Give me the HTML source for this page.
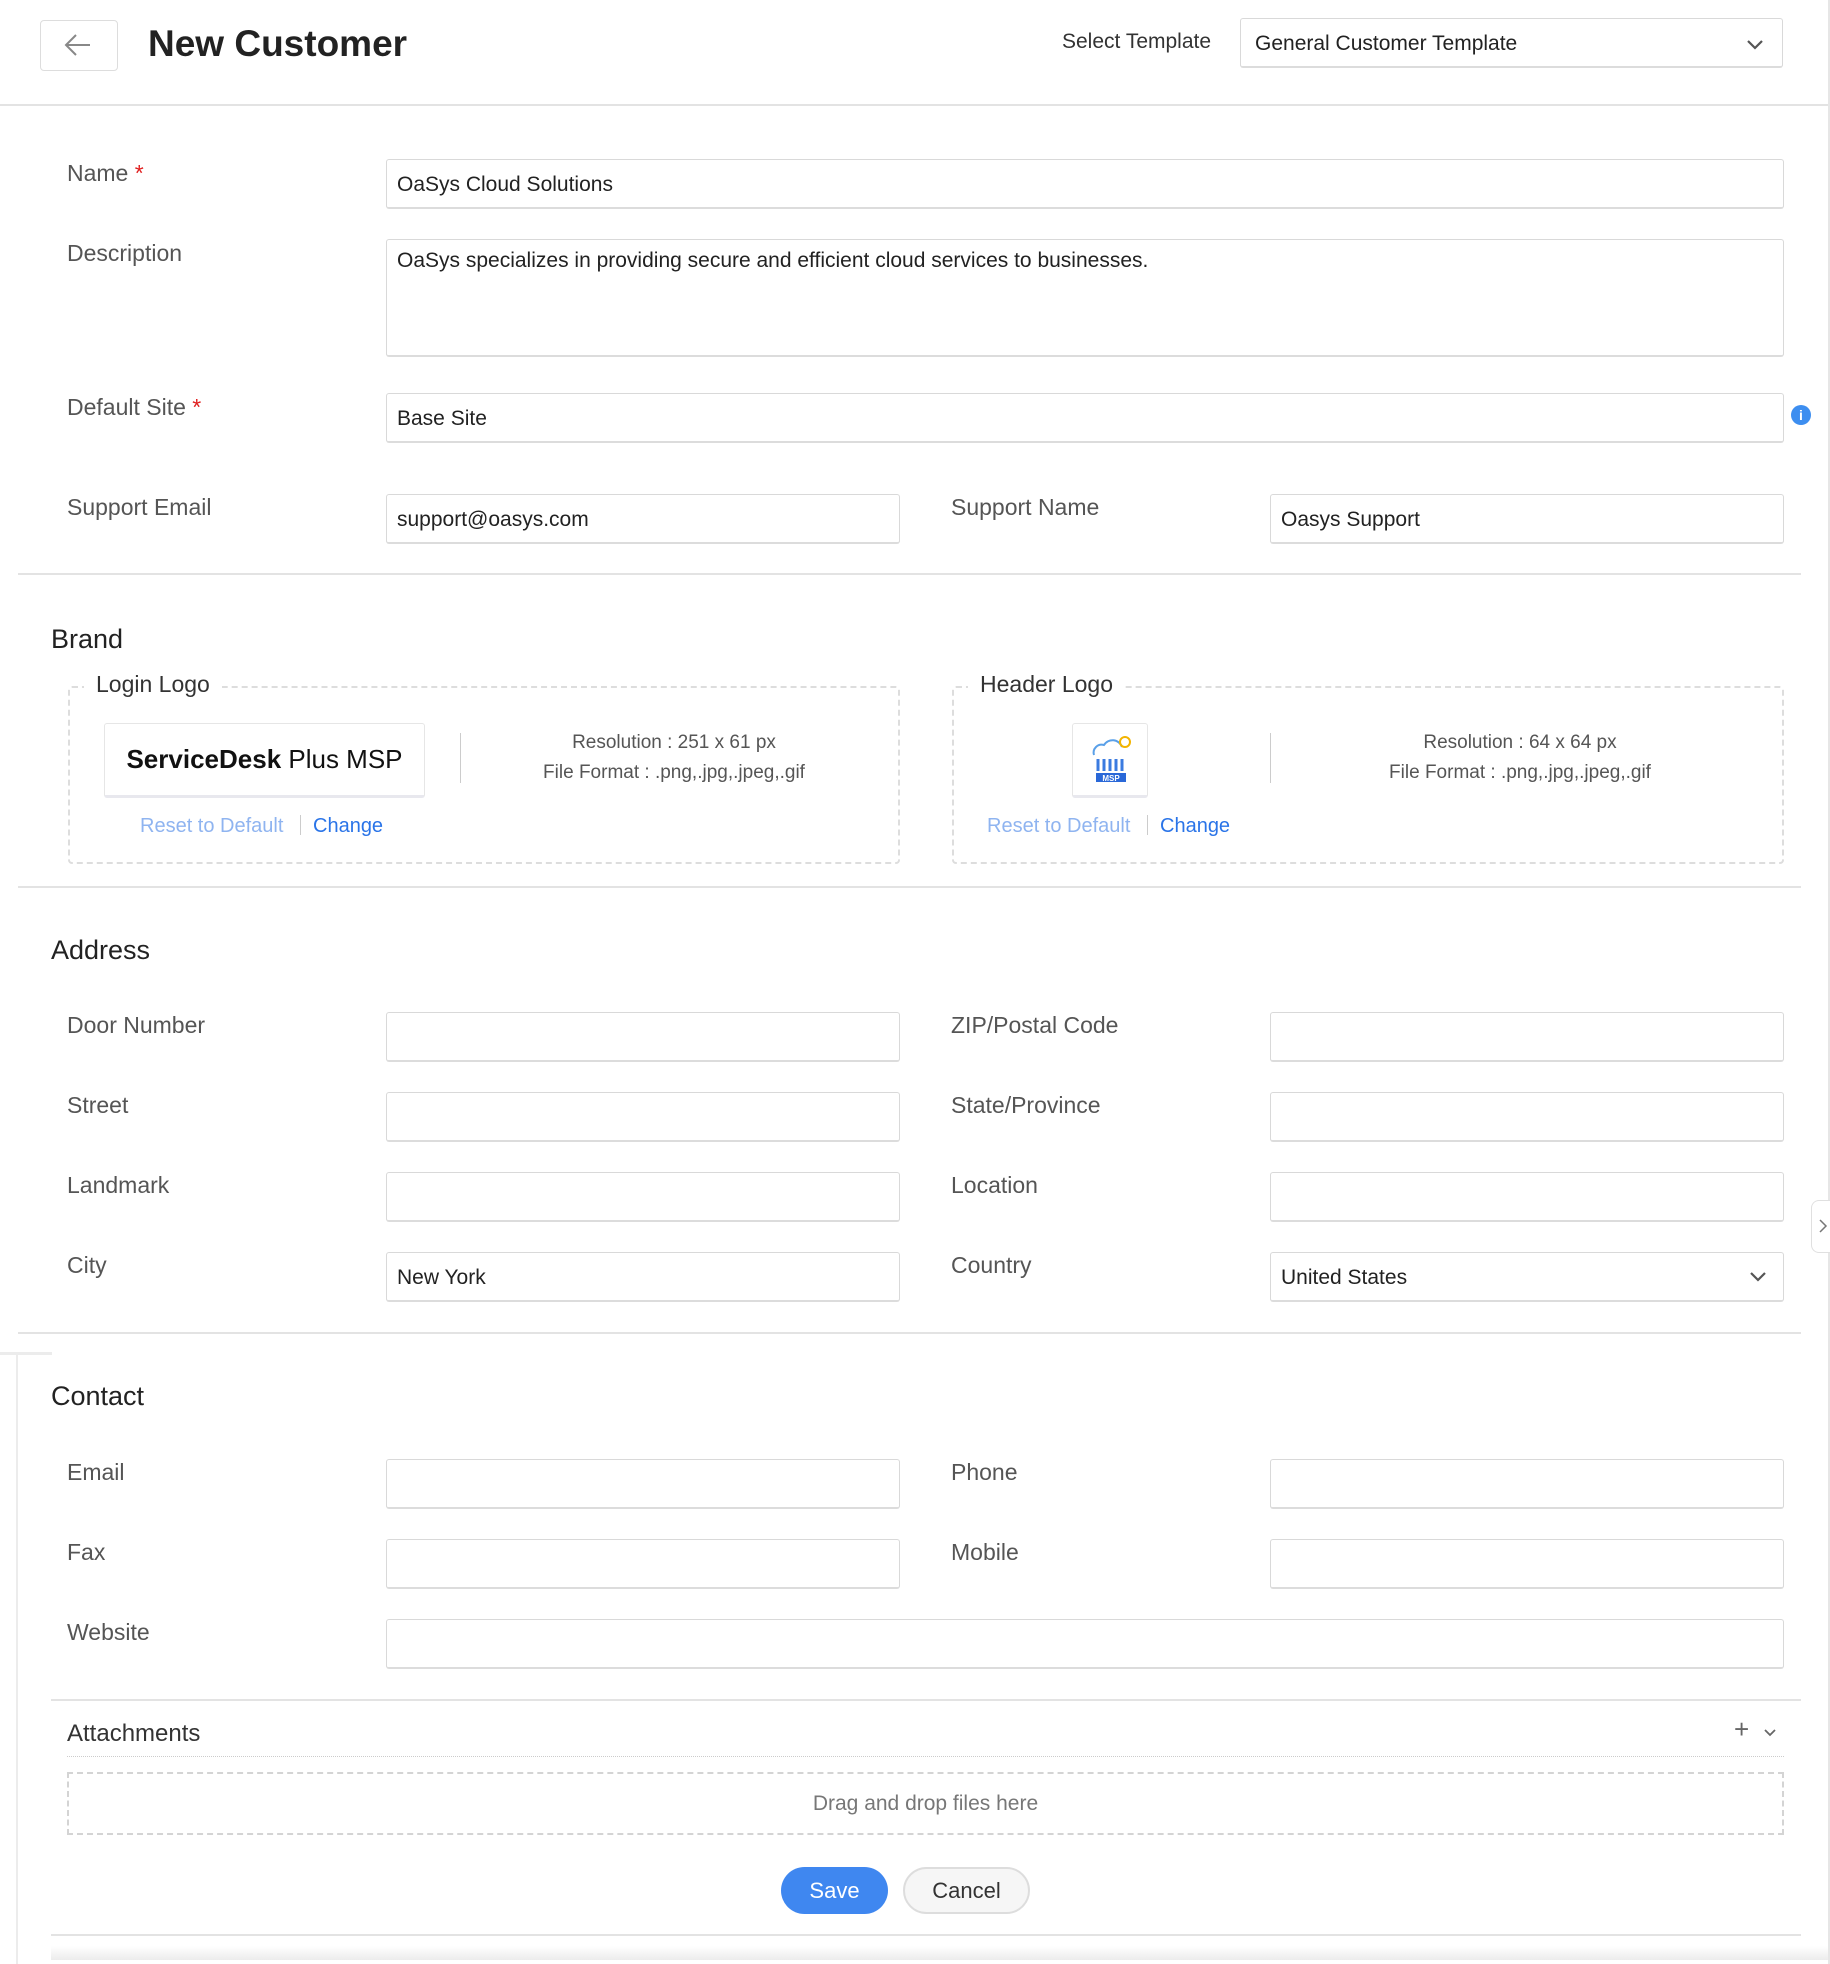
<!DOCTYPE html>
<html><head><meta charset="utf-8"><style>
*{box-sizing:border-box;margin:0;padding:0}
body{width:1830px;height:1964px;background:#fff;font-family:"Liberation Sans",sans-serif;position:relative;overflow:hidden;color:#222}
.a{position:absolute}
.lbl{position:absolute;font-size:23px;color:#555;left:67px;margin-top:2px}
.rl{left:951px}
.in{position:absolute;border:1px solid #d9d9d9;border-bottom:2px solid #dcdcdc;border-radius:3px;background:#fff;font-size:21px;color:#222;padding-left:10px;padding-top:2px;display:flex;align-items:center;height:50px}
.L{left:386px;width:514px}
.R{left:1270px;width:514px}
.F{left:386px;width:1398px}
.hr{position:absolute;height:2px;background:#e3e3e3}
.h{position:absolute;font-size:27px;color:#222;left:51px;margin-top:3px}
.req{color:#e02020}
.link{position:absolute;font-size:20px;margin-top:2px}
.res{position:absolute;font-size:19px;color:#555;text-align:center;line-height:30px;margin-top:2px}
</style></head><body>
<div class="a" style="right:0;top:0;width:2px;height:1964px;background:#e6e6e6"></div>
<div class="a" style="left:40px;top:20px;width:78px;height:51px;border:1px solid #ddd;border-radius:4px"></div>
<svg class="a" style="left:63px;top:32px" width="30" height="26" viewBox="0 0 30 26"><path d="M27 13H3M13 3L3 13l10 10" fill="none" stroke="#888" stroke-width="2"/></svg>
<div class="a" style="left:148px;top:23px;font-size:37px;font-weight:bold;color:#222">New Customer</div>
<div class="a" style="left:1062px;top:30px;font-size:21px;color:#333">Select Template</div>
<div class="in" style="left:1240px;top:18px;width:543px;padding-left:14px">General Customer Template</div>
<svg class="a" style="left:1745px;top:38px" width="20" height="14" viewBox="0 0 20 14"><path d="M3 3l7 7 7-7" fill="none" stroke="#555" stroke-width="2.2"/></svg>
<div class="hr" style="left:0;top:104px;width:1828px"></div>

<div class="lbl" style="top:158px">Name <span class="req">*</span></div>
<div class="in F" style="top:159px">OaSys Cloud Solutions</div>
<div class="lbl" style="top:238px">Description</div>
<div class="in F" style="top:239px;height:118px;align-items:flex-start;padding-top:9px">OaSys specializes in providing secure and efficient cloud services to businesses.</div>
<div class="lbl" style="top:392px">Default Site <span class="req">*</span></div>
<div class="in F" style="top:393px">Base Site</div>
<div class="a" style="left:1791px;top:405px;width:20px;height:20px;border-radius:50%;background:#3d8ef0;color:#fff;font-size:14px;font-weight:bold;text-align:center;line-height:20px">i</div>
<div class="lbl" style="top:492px">Support Email</div>
<div class="in L" style="top:494px">support@oasys.com</div>
<div class="lbl rl" style="top:492px">Support Name</div>
<div class="in R" style="top:494px">Oasys Support</div>
<div class="hr" style="left:18px;top:573px;width:1783px"></div>

<div class="h" style="top:621px">Brand</div>
<div class="a" style="left:68px;top:686px;width:832px;height:178px;border:2px dashed #ddd;border-radius:4px"></div>
<div class="a" style="left:84px;top:671px;background:#fff;padding:0 12px;font-size:23px;color:#333">Login Logo</div>
<div class="a" style="left:104px;top:723px;width:321px;height:75px;border:1px solid #e6e6e6;border-bottom:3px solid #e8e8ee;border-radius:3px;display:flex;align-items:center;justify-content:center;font-size:26px;color:#111"><b>ServiceDesk</b>&nbsp;Plus MSP</div>
<div class="a" style="left:460px;top:733px;width:1px;height:50px;background:#ccc"></div>
<div class="res" style="left:480px;width:388px;top:726px">Resolution : 251 x 61 px<br>File Format : .png,.jpg,.jpeg,.gif</div>
<div class="link" style="left:140px;top:813px;color:#8fb4f0">Reset to Default</div>
<div class="a" style="left:300px;top:815px;width:1px;height:20px;background:#ccc"></div>
<div class="link" style="left:313px;top:813px;color:#2a74e8">Change</div>

<div class="a" style="left:952px;top:686px;width:832px;height:178px;border:2px dashed #ddd;border-radius:4px"></div>
<div class="a" style="left:968px;top:671px;background:#fff;padding:0 12px;font-size:23px;color:#333">Header Logo</div>
<div class="a" style="left:1072px;top:723px;width:76px;height:75px;border:1px solid #e6e6e6;border-bottom:3px solid #e8e8ee;border-radius:3px"></div>
<svg class="a" style="left:1088px;top:733px" width="46" height="52" viewBox="0 0 46 52"><path d="M6 22a8 8 0 0 1 10-10 10 10 0 0 1 18 2" fill="none" stroke="#5aa0e8" stroke-width="2"/><circle cx="37" cy="9" r="5" fill="none" stroke="#f3b400" stroke-width="2"/><path d="M10 26v12M16 26v12M22 26v12M28 26v12M34 26v12" stroke="#3b7be0" stroke-width="3"/><rect x="8" y="40" width="30" height="9" fill="#2a68d8"/><text x="23" y="48" font-size="8" font-weight="bold" fill="#fff" text-anchor="middle" font-family="Liberation Sans">MSP</text></svg>
<div class="a" style="left:1270px;top:733px;width:1px;height:50px;background:#ccc"></div>
<div class="res" style="left:1320px;width:400px;top:726px">Resolution : 64 x 64 px<br>File Format : .png,.jpg,.jpeg,.gif</div>
<div class="link" style="left:987px;top:813px;color:#8fb4f0">Reset to Default</div>
<div class="a" style="left:1147px;top:815px;width:1px;height:20px;background:#ccc"></div>
<div class="link" style="left:1160px;top:813px;color:#2a74e8">Change</div>
<div class="hr" style="left:18px;top:886px;width:1783px"></div>

<div class="h" style="top:932px">Address</div>
<div class="lbl" style="top:1010px">Door Number</div><div class="in L" style="top:1012px"></div>
<div class="lbl rl" style="top:1010px">ZIP/Postal Code</div><div class="in R" style="top:1012px"></div>
<div class="lbl" style="top:1090px">Street</div><div class="in L" style="top:1092px"></div>
<div class="lbl rl" style="top:1090px">State/Province</div><div class="in R" style="top:1092px"></div>
<div class="lbl" style="top:1170px">Landmark</div><div class="in L" style="top:1172px"></div>
<div class="lbl rl" style="top:1170px">Location</div><div class="in R" style="top:1172px"></div>
<div class="lbl" style="top:1250px">City</div><div class="in L" style="top:1252px">New York</div>
<div class="lbl rl" style="top:1250px">Country</div><div class="in R" style="top:1252px">United States</div>
<svg class="a" style="left:1748px;top:1270px" width="20" height="14" viewBox="0 0 20 14"><path d="M3 3l7 7 7-7" fill="none" stroke="#555" stroke-width="2.2"/></svg>
<div class="hr" style="left:18px;top:1332px;width:1783px"></div>
<div class="a" style="left:1811px;top:1200px;width:19px;height:53px;border:1px solid #e0e0e0;border-right:none;border-radius:8px 0 0 8px;background:#fff"></div>
<svg class="a" style="left:1818px;top:1218px" width="10" height="16" viewBox="0 0 10 16"><path d="M2 2l6 6-6 6" fill="none" stroke="#777" stroke-width="1.5"/></svg>

<div class="a" style="left:0;top:1352px;width:52px;height:3px;background:#ececec"></div>
<div class="a" style="left:16px;top:1355px;width:2px;height:609px;background:#ececec"></div>
<div class="h" style="top:1378px">Contact</div>
<div class="lbl" style="top:1457px">Email</div><div class="in L" style="top:1459px"></div>
<div class="lbl rl" style="top:1457px">Phone</div><div class="in R" style="top:1459px"></div>
<div class="lbl" style="top:1537px">Fax</div><div class="in L" style="top:1539px"></div>
<div class="lbl rl" style="top:1537px">Mobile</div><div class="in R" style="top:1539px"></div>
<div class="lbl" style="top:1617px">Website</div><div class="in F" style="top:1619px"></div>
<div class="hr" style="left:51px;top:1699px;width:1750px"></div>
<div class="a" style="left:67px;top:1720px;font-size:24px;color:#333">Attachments</div>
<div class="a" style="left:1734px;top:1714px;font-size:26px;color:#666">+</div>
<svg class="a" style="left:1763px;top:1728px" width="14" height="10" viewBox="0 0 14 10"><path d="M2 2l5 5 5-5" fill="none" stroke="#666" stroke-width="1.8"/></svg>
<div class="a" style="left:67px;top:1756px;width:1717px;border-top:1px dotted #ccc"></div>
<div class="a" style="left:67px;top:1772px;width:1717px;height:63px;border:2px dashed #d4d4d4;display:flex;align-items:center;justify-content:center;font-size:21px;color:#777">Drag and drop files here</div>
<div class="a" style="left:781px;top:1867px;width:107px;height:47px;border-radius:24px;background:#3f87f0;color:#fff;font-size:22px;display:flex;align-items:center;justify-content:center">Save</div>
<div class="a" style="left:903px;top:1867px;width:127px;height:47px;border-radius:24px;background:#f6f6f6;border:2px solid #ddd;color:#333;font-size:22px;display:flex;align-items:center;justify-content:center">Cancel</div>
<div class="hr" style="left:51px;top:1934px;width:1750px"></div>
<div class="a" style="left:51px;top:1946px;width:1777px;height:14px;background:linear-gradient(#fff,#ececec)"></div>
</body></html>
